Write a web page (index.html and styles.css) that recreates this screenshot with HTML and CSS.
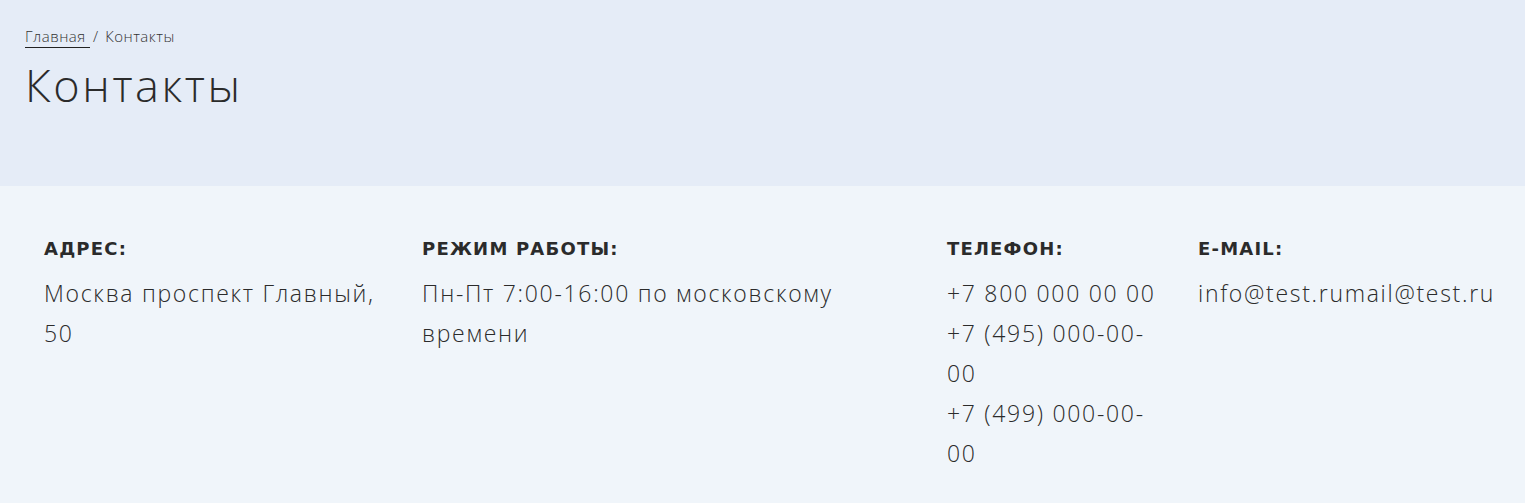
FILE: index.html
```html
<!DOCTYPE html>
<html lang="ru">
<head>
<meta charset="utf-8">
<title>Контакты</title>
<link rel="stylesheet" href="styles.css">
</head>
<body>
<section class="page-head">
  <nav class="crumbs">
    <a href="#">Главная</a>
    <span class="sep">/</span>
    <span>Контакты</span>
  </nav>
  <h1>Контакты</h1>
</section>

<section class="contacts">
  <div class="item">
    <h3>Адрес:</h3>
    <p>Москва проспект Главный, 50</p>
  </div>
  <div class="item">
    <h3>Режим работы:</h3>
    <p>Пн-Пт 7:00-16:00 по московскому времени</p>
  </div>
  <div class="item">
    <h3>Телефон:</h3>
    <p>+7 800 000 00 00</p>
    <p>+7 (495) 000-00-00</p>
    <p>+7 (499) 000-00-00</p>
  </div>
  <div class="item">
    <h3>E-mail:</h3>
    <p>info@test.rumail@test.ru</p>
  </div>
</section>
</body>
</html>
```

FILE: styles.css
```css
body {
  margin:0;
  padding:0;
  font-family:'Open Sans', 'Noto Sans', sans-serif;
  color:#2b2b2b;
  background:#f0f5fa;
}

h1, h3, p {
  margin:0;
}

.page-head {
  background:#e5ecf7;
  height:186px;
  box-sizing:border-box;
  padding:26px 25px 0;
}

.crumbs {
  font-size:15px;
  font-weight:300;
  line-height:20px;
  color:#333;
  letter-spacing:0.5px;
}

.crumbs a {
  color:#333;
  text-decoration:none;
  border-bottom:1px solid #222;
  padding:0 4px 1px 0;
}

.crumbs .sep {
  margin:0 2px 0 -1px;
}

h1 {
  margin-top:9px;
  font-size:45px;
  font-weight:300;
  line-height:60px;
  letter-spacing:2.6px;
}

.contacts {
  display:grid;
  grid-template-columns:378px 525px 251px 1fr;
  padding:50px 24px 30px;
}

.item {
  padding:0 20px;
}

.item h3 {
  font-family:'DejaVu Sans', 'Open Sans', sans-serif;
  font-size:18px;
  font-weight:700;
  text-transform:uppercase;
  line-height:26px;
  letter-spacing:1.2px;
  margin-bottom:11px;
}

.item p {
  font-size:23px;
  font-weight:300;
  line-height:40px;
  letter-spacing:1.7px;
}
```
